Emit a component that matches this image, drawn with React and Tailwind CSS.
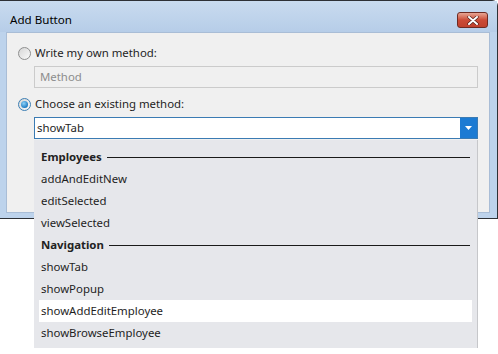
import React from 'react';

const font = { fontFamily: '"Noto Sans", "Open Sans", sans-serif' };

const Radio = ({ checked }) => (
  <span className={`relative flex items-center justify-center w-[13px] h-[13px] rounded-full border ${checked ? 'border-[#3d7fb4]' : 'border-[#8e8f8f]'} bg-gradient-to-br from-[#d6d6d6] to-[#fafafa]`}>
    {checked && (
      <span className="block w-[7px] h-[7px] rounded-full bg-[radial-gradient(circle_at_40%_35%,#8fd2f7,#1f7cc4_70%,#0f5d9c)]" />
    )}
  </span>
);

const groups = [
  { title: 'Employees', items: ['addAndEditNew', 'editSelected', 'viewSelected'] },
  { title: 'Navigation', items: ['showTab', 'showPopup', 'showAddEditEmployee', 'showBrowseEmployee'] },
];

const App = () => {
  return (
    <div className="relative w-[498px] h-[354px] bg-white overflow-hidden text-[11.4px] text-[#1e1e1e]" style={font}>
      {/* Window */}
      <div className="w-[498px] h-[219px] flex flex-col bg-[#bdd3ec] border-t border-r border-b border-[#2e3136] rounded-tr-[6px]">
        {/* Title bar */}
        <div className="h-[31px] flex items-start justify-between bg-gradient-to-b from-[#c9dbef] to-[#b6cde8]">
          <span className="pl-[10px] pt-[11px] leading-[16px] text-[11.6px] text-black">Add Button</span>
          <div className="mt-[11px] mr-[9px] w-[31px] h-[16px] rounded-[3px] border border-[#6e2a22] bg-gradient-to-b from-[#e6a493] via-[#cb4a36] to-[#c0412d] flex items-center justify-center">
            <svg width="12" height="9" viewBox="0 0 12 9">
              <path d="M2 1 L10 8 M10 1 L2 8" stroke="#4a1a14" strokeWidth="3.2" strokeLinecap="round" />
              <path d="M2 1 L10 8 M10 1 L2 8" stroke="#ffffff" strokeWidth="2" strokeLinecap="round" />
            </svg>
          </div>
        </div>

        {/* Content */}
        <div className="ml-[6px] mr-[7px] h-[181px] bg-[#f0f0f0] border border-[#a9bdd6] flex flex-col pl-[11px]">
          <div className="mt-[12px] h-[16px] flex items-center gap-[4px]">
            <Radio />
            <span className="leading-[16px]">Write my own method:</span>
          </div>
          <div className="mt-[5px] ml-[16px] w-[444px] h-[22px] border border-[#cbcbcb] bg-[#f0f0f0] flex items-center pl-[5px] text-[#8d8d8d]">
            Method
          </div>
          <div className="mt-[8px] h-[16px] flex items-center gap-[4px]">
            <Radio checked />
            <span className="leading-[16px]">Choose an existing method:</span>
          </div>
          <div className="mt-[5px] ml-[16px] w-[444px] h-[22px] border border-[#3b7bb3] bg-white flex items-center justify-between">
            <span className="pl-[2px]">showTab</span>
            <span className="w-[17px] h-full bg-[#1c7bd3] flex items-center justify-center">
              <svg width="7" height="4" viewBox="0 0 7 4"><path d="M0 0 H7 L3.5 4 Z" fill="#ffffff" /></svg>
            </span>
          </div>
        </div>
      </div>

      {/* Dropdown list */}
      <div className="absolute left-[34px] top-[140px] w-[444px] h-[208px] bg-[#e6e7eb] border-r border-[#c6c7ca] pt-[6px] px-[5px]">
        {groups.map((g) => (
          <div key={g.title}>
            <div className="h-[22px] flex items-center pl-[2px] pr-[2px] gap-[5px]">
              <span className="font-bold text-[#222]">{g.title}</span>
              <span className="flex-1 h-px bg-[#1a1a1a]" />
            </div>
            {g.items.map((it) => (
              <div
                key={it}
                className={`h-[22px] flex items-center pl-[2px] ${it === 'showAddEditEmployee' ? 'bg-white' : ''}`}
              >
                {it}
              </div>
            ))}
          </div>
        ))}
      </div>
    </div>
  );
};

export default App;
